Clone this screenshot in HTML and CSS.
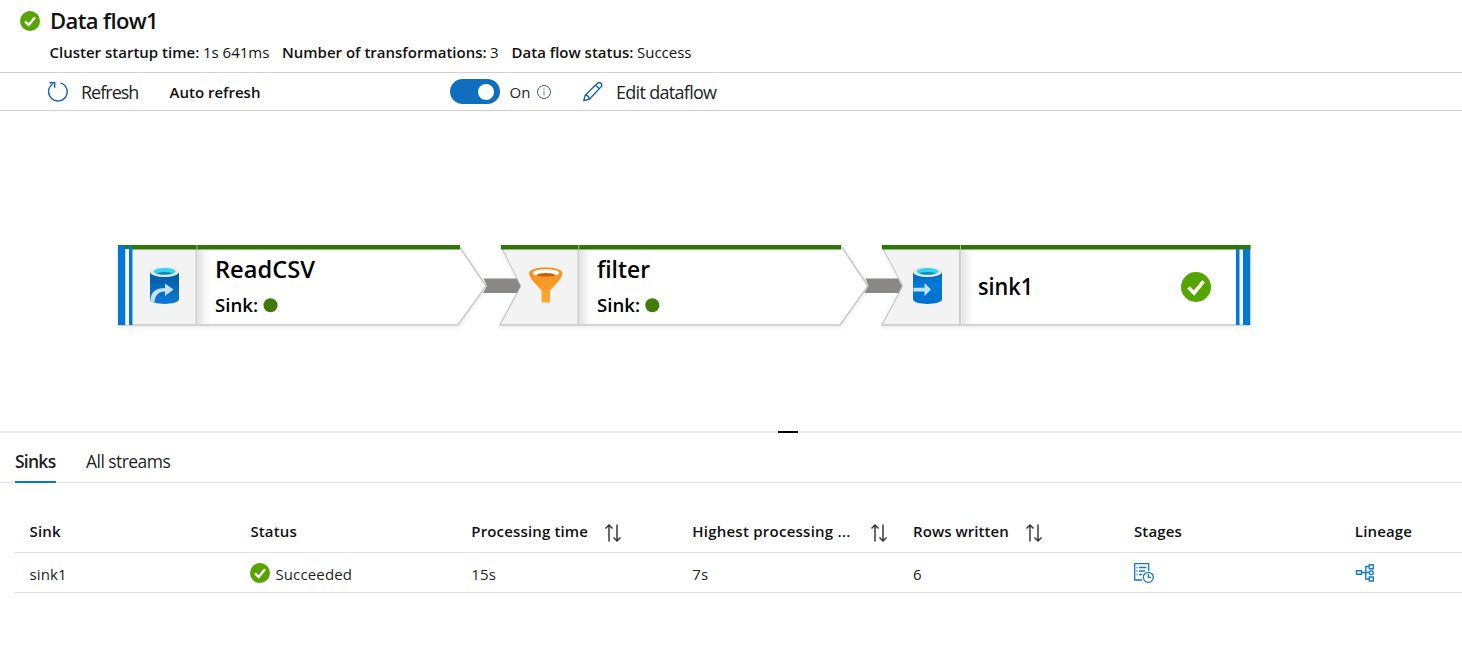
FILE: index.html
```html
<!DOCTYPE html>
<html lang="en">
<head>
<meta charset="utf-8">
<title>Data flow1</title>
<link rel="stylesheet" href="styles.css">
</head>
<body>
<svg class="defs" width="0" height="0">
  <defs>
    <symbol id="check" viewBox="0 0 20 20"><circle cx="10" cy="10" r="10" fill="#57a300"/><path d="M5 10.300l3.700 3.700L15 6.200" fill="none" stroke="#fff" stroke-width="2.400"/></symbol>
    <symbol id="sort" viewBox="0 0 18 18"><path d="M5 17.500V1M1.500 4.500L5 1l3.500 3.500M13 .5V17M9.500 13.500L13 17l3.500-3.500" fill="none" stroke="#3b3a39" stroke-width="1.500"/></symbol>
    <linearGradient id="shade"><stop offset="0" stop-color="#e2e2e2"/><stop offset=".5" stop-color="#f6f6f6"/><stop offset="1" stop-color="#fff"/></linearGradient>
    <linearGradient id="blue" x2="0" y2="1"><stop offset="0" stop-color="#005ba1"/><stop offset="1" stop-color="#0f78d4"/></linearGradient>
    <linearGradient id="blue2" x2="0" y2="1"><stop offset="0" stop-color="#0069bd"/><stop offset=".4" stop-color="#0078d7"/><stop offset="1" stop-color="#0070cc"/></linearGradient>
    <linearGradient id="orange" x2="0" y2="1"><stop offset="0" stop-color="#f78d1e"/><stop offset="1" stop-color="#ffa92e"/></linearGradient>
    <filter id="soft" x="-5%" y="-10%" width="110%" height="125%"><feDropShadow dx="0" dy="1" stdDeviation="2" flood-opacity=".1"/></filter>
  </defs>
</svg>
<header class="header">
  <div class="title-row"><svg class="title-icon" width="20" height="20"><use href="#check"/></svg><h1 class="title">Data flow1</h1></div>
  <div class="facts">
    <b class="fact-a">Cluster startup time:</b><span class="val-a">1s 641ms</span>
    <b class="fact-b">Number of transformations:</b><span class="val-b">3</span>
    <b class="fact-c">Data flow status:</b><span class="val-c">Success</span>
  </div>
</header>
<div class="toolbar">
  <button class="tool refresh"><svg width="20" height="20" viewBox="0 0 20 20" fill="none" stroke="#1160b7" stroke-width="1.400"><path d="M12.500 .8A9.300 9.300 0 1 1 4.700 2M1.500 .8h5.200v5"/></svg><span class="tool-text">Refresh</span></button>
  <b class="auto">Auto refresh</b>
  <span class="switch"><i class="knob"></i></span>
  <span class="on">On</span>
  <svg class="info" width="14" height="14" viewBox="0 0 14 14" fill="none" stroke="#555"><circle cx="7" cy="7" r="6.500"/><path d="M7 6v4.500M7 3.500V5" stroke="#4a7fb5"/></svg>
  <button class="tool edit"><svg width="20" height="20" viewBox="0 0 20 20" fill="none" stroke="#0b58b0" stroke-width="1.300"><path d="M.8 18.700l1.500-5.700L14.500 1.200c2.300-1.900 5.500.8 3.700 3.500L6.400 17.100zM12.500 3l4 4M2.300 13c1.800.2 3.600 1.900 4.100 4.100"/></svg><span class="tool-text">Edit dataflow</span></button>
</div>
<main class="canvas">
<svg class="graph" width="1462" height="320" viewBox="0 111 1462 320">
  <g filter="url(#soft)">
    <path d="M118.500 246H459L486 286L458 325H118.500z" fill="#fff" stroke="#c8c8c8" stroke-width="1.500"/>
    <path d="M501 246H841L868 286L840 325H500L521 286z" fill="#fff" stroke="#c8c8c8" stroke-width="1.500"/>
    <path d="M882 246H1250V325H882L903 286z" fill="#fff" stroke="#c8c8c8" stroke-width="1.500"/>
  </g>
  <path d="M133 249h63v75h-63zM503 249h75v75h-76.500L521.500 286zM884 249h75v75h-75.500L903.500 286z" fill="#f3f3f3"/>
  <g fill="url(#shade)"><path d="M198 249h13v75h-13z"/><path d="M580 249h13v75h-13z"/><path d="M961.500 249h13v75h-13z"/></g>
  <path d="M196.500 249v76M578.500 249v76M960 249v76" stroke="#cdcdcd" stroke-width="2"/>
  <path d="M118 245h342v4.500H118zM501 245h340v4.500H501zM882 245h368.500v4.500H882z" fill="#2f7508"/>
  <path d="M197 245v5M578.800 245v5M960.500 245v5" stroke="#a8bf98"/>
  <path d="M118 246h7.500v79H118zM129 246h3.500v79H129zM1236 249h3.500v76h-3.500zM1243 249h7v76h-7z" fill="#0078d7"/>
  <path d="M125.500 249h3.500v76h-3.500z" fill="#fff"/>
  <path d="M483.500 278.500H516.500L520.500 286l-3.500 7h-34l4-7zM865.500 278.500h32.500l4 7.500-3.500 7h-34l4-7z" fill="#8a8886"/>

  <g>
    <path d="M150 272v27c0 6.500 29 6.500 29 0v-27z" fill="url(#blue)"/><ellipse cx="164.500" cy="271.800" rx="14.500" ry="5.200" fill="#e8e8e8"/><ellipse cx="164.500" cy="271.500" rx="11" ry="3.500" fill="#32d4f5"/><path d="M156 273.200c5-1.700 12-1.700 17 0-4 1.900-13 1.900-17 0z" fill="#198ab3"/>
    <path d="M150.500 301c0-9 5-13 14.500-13v-4.500l8.500 6-8.500 6.500v-4.500c-7 0-10 4-10.500 11z" fill="#c3e1fa"/>
  </g>
  <g>
    <path d="M913 272v27c0 6.500 29 6.500 29 0v-27z" fill="url(#blue2)"/><ellipse cx="927.500" cy="271.800" rx="14.500" ry="5.200" fill="#e8e8e8"/><ellipse cx="927.500" cy="271.500" rx="11" ry="3.500" fill="#32d4f5"/><path d="M919 273.200c5-1.700 12-1.700 17 0-4 1.900-13 1.900-17 0z" fill="#198ab3"/>
    <path d="M913.500 287.700h11v-4.700l6.500 6.500-6.500 6.500v-4.500h-11z" fill="#c3e1fa"/>
  </g>
  <g>
    <path d="M529 273c0 5 5 9 12.500 17.500v10.700q0 1.300 1.300 1.300h5.900q1.300 0 1.300-1.300v-10.700C557.500 282 562.500 278 562.500 273c0-7.500-33.500-7.500-33.500 0z" fill="url(#orange)"/><ellipse cx="546" cy="273" rx="13.200" ry="3.800" fill="#fff"/><path d="M536 275.200c4-3 16-3 20 0-4 2.200-16 2.200-20 0z" fill="#d15900"/>
  </g>
  <circle cx="270.500" cy="305.200" r="7" fill="#427908"/><circle cx="652.300" cy="305.200" r="7" fill="#427908"/>
  <svg x="1181" y="272" width="30" height="30"><use href="#check"/></svg>
  <g class="node-name"><text x="215" y="277.500" textLength="100" lengthAdjust="spacingAndGlyphs">ReadCSV</text><text x="597" y="277.500" textLength="53" lengthAdjust="spacingAndGlyphs">filter</text><text x="978" y="295" textLength="55" lengthAdjust="spacingAndGlyphs">sink1</text></g>
  <g class="node-sub"><text x="215" y="312" textLength="43" lengthAdjust="spacingAndGlyphs">Sink:</text><text x="597" y="312" textLength="43" lengthAdjust="spacingAndGlyphs">Sink:</text></g>
</svg>
</main>
<div class="splitter"><i class="grip"></i></div>
<nav class="tabs"><a class="tab active">Sinks</a><a class="tab">All streams</a></nav>
<section class="table">
  <div class="row head">
    <div class="cell">Sink</div>
    <div class="cell">Status</div>
    <div class="cell"><span class="h-time">Processing time</span><svg class="sort" width="18" height="18"><use href="#sort"/></svg></div>
    <div class="cell"><span class="h-high">Highest processing ...</span><svg class="sort" width="18" height="18"><use href="#sort"/></svg></div>
    <div class="cell"><span class="h-rows">Rows written</span><svg class="sort" width="18" height="18"><use href="#sort"/></svg></div>
    <div class="cell">Stages</div>
    <div class="cell">Lineage</div>
  </div>
  <div class="row body">
    <div class="cell">sink1</div>
    <div class="cell"><svg class="ok" width="20" height="20"><use href="#check"/></svg>Succeeded</div>
    <div class="cell">15s</div>
    <div class="cell">7s</div>
    <div class="cell">6</div>
    <div class="cell"><svg class="row-icon" width="20" height="20" viewBox="0 0 20 20" fill="none" stroke="#1479d0" stroke-width="1.300"><path d="M8 17H.7V.7h14V8M2.500 4.500h1M5 4.500h7.500M2.500 8h1M5 8h6M2.500 11.500h1M5 11.500h3"/><circle cx="14.300" cy="14.300" r="5"/><path d="M14.300 11v3.300H17"/></svg></div>
    <div class="cell"><svg class="row-icon" width="20" height="20" viewBox="0 0 20 20" fill="none" stroke="#1479d0" stroke-width="1.400"><path d="M1.500 7.700h5v3.600h-5zM14.300 1.700h4v4h-4zM14.300 14h4v4h-4zM6.500 9.500h8M14.300 3.500h-3.500V16h3.500"/><circle cx="16.300" cy="9.700" r="1.900"/></svg></div>
  </div>
</section>
</body>
</html>
```
FILE: styles.css
```css
* { box-sizing: border-box; }
body { margin: 0; width: 1462px; height: 657px; overflow: hidden; background: #fff; color: #201f1e; font-family: "Open Sans", "Noto Sans", sans-serif; font-size: 15px; }
b { font-weight: 600; }
.defs { display: block; height: 0; }
.header { height: 73px; border-bottom: 1px solid #d2d0ce; padding: 7px 20px 0; }
.title-row { display: flex; align-items: center; height: 28px; gap: 10px; }
.title { margin: -2px 0 0; font-size: 22px; font-weight: 550; color: #111; letter-spacing: -.6px; }
.facts { display: flex; height: 20px; margin: 7px 0 0 29.500px; line-height: 20px; white-space: nowrap; color: #111; }
.fact-a, .fact-b, .fact-c { flex: none; }
.fact-a { width: 153.500px; }
.val-a { width: 79px; }
.fact-b { width: 208px; }
.val-b { width: 21.500px; }
.fact-c { width: 125.500px; }
.toolbar { display: flex; align-items: center; height: 38px; border-bottom: 1px solid #d2d0ce; padding-left: 48px; white-space: nowrap; }
.tool { display: flex; align-items: center; gap: 13px; border: 0; padding: 0; background: none; color: #201f1e; font: 18px "Open Sans", sans-serif; letter-spacing: -1px; }
.tool-text { padding-top: 1px; }
.refresh { width: 121.500px; }
.auto { width: 280.500px; color: #111; }
.switch { display: flex; justify-content: flex-end; align-items: center; width: 50px; height: 25px; border-radius: 13px; background: #106ebe; padding-right: 6px; }
.knob { width: 16px; height: 16px; border-radius: 50%; background: #fff; }
.on { margin-left: 9.500px; width: 27.500px; }
.edit { margin-left: 32px; }
.edit .tool-text { letter-spacing: -.7px; }
.canvas { height: 320px; }
.graph { display: block; }
.node-name { font-size: 24px; font-weight: 550; fill: #000; }
.node-sub { font-size: 18px; font-weight: 550; fill: #000; }
.splitter { height: 2px; background: #ececec; padding-left: 778px; }
.grip { display: block; width: 20px; height: 2px; background: #000; }
.tabs { display: flex; gap: 30px; height: 50px; padding-left: 15px; border-bottom: 1px solid #e1dfdd; font-size: 17.500px; }
.tab { height: 50px; padding-top: 16px; line-height: 24px; letter-spacing: -.55px; }
.active { width: 41px; font-weight: 600; letter-spacing: -.75px; border-bottom: 2px solid #0078d4; }
.table { margin-left: 15px; }
.row { display: grid; grid-template-columns: repeat(7, 220.900px); border-bottom: 1px solid #e1dfdd; width: 1447px; overflow: hidden; letter-spacing: .15px; }
.head { height: 70px; padding-top: 28px; font-weight: 600; color: #111; }
.body { height: 40px; padding-top: 3px; }
.cell { display: flex; align-items: center; padding-left: 14.500px; white-space: nowrap; }
.head .cell { height: 40px; }
.sort { margin-top: 3px; flex: none; }
.h-time { width: 133px; }
.h-high { width: 178px; letter-spacing: .25px; }
.h-rows { width: 112px; letter-spacing: .05px; }
.ok { margin: -3px 5px 0 0; }
.row-icon { margin-top: -3px; }
```
